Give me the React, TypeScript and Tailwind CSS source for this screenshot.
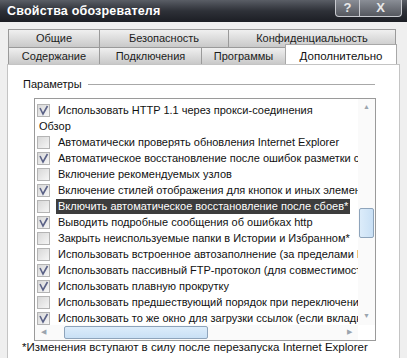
import React from 'react';

type Row = { text: string; checked?: boolean; header?: boolean; selected?: boolean };

const rows: Row[] = [
  { text: 'Использовать HTTP 1.1 через прокси-соединения', checked: true },
  { text: 'Обзор', header: true },
  { text: 'Автоматически проверять обновления Internet Explorer' },
  { text: 'Автоматическое восстановление после ошибок разметки страниц', checked: true },
  { text: 'Включение рекомендуемых узлов' },
  { text: 'Включение стилей отображения для кнопок и иных элементов', checked: true },
  { text: 'Включить автоматическое восстановление после сбоев*', selected: true },
  { text: 'Выводить подробные сообщения об ошибках http', checked: true },
  { text: 'Закрыть неиспользуемые папки в Истории и Избранном*' },
  { text: 'Использовать встроенное автозаполнение (за пределами Internet Explorer)' },
  { text: 'Использовать пассивный FTP-протокол (для совместимости с брандмауэрами)', checked: true },
  { text: 'Использовать плавную прокрутку', checked: true },
  { text: 'Использовать предшествующий порядок при переключении вкладок' },
  { text: 'Использовать то же окно для загрузки ссылок (если вкладки отключены)', checked: true },
];

const topTabs = [
  { label: 'Общие', w: 'w-[92px]' },
  { label: 'Безопасность', w: 'w-[130px]' },
  { label: 'Конфиденциальность', w: 'w-[168px]' },
];

const bottomTabs = [
  { label: 'Содержание', w: 'w-[92px]' },
  { label: 'Подключения', w: 'w-[103px]' },
  { label: 'Программы', w: 'w-[85px]' },
];

function CheckBox({ checked }: { checked?: boolean }) {
  return (
    <div className="w-[13px] h-[13px] shrink-0 border border-[#b4b4b4] bg-gradient-to-br from-[#d8d8d8] to-[#f6f6f6] flex items-center justify-center">
      {checked && (
        <svg width="11" height="11" viewBox="0 0 11 11">
          <path d="M2 3 L5 9 L9.5 1" fill="none" stroke="#5b6287" strokeWidth="1.6" />
        </svg>
      )}
    </div>
  );
}

function TabButton({ label, w }: { label: string; w: string }) {
  return (
    <div className={`${w} h-full flex items-center justify-center border border-[#9a9a9a] border-b-0 -ml-px first:ml-0 bg-gradient-to-b from-[#f0f0f0] to-[#c9c9c9] text-[#1c1c1c]`}>
      {label}
    </div>
  );
}

export default function App() {
  return (
    <div
      className="w-[407px] h-[358px] overflow-hidden bg-[#efefef] text-[11px] text-[#111] relative"
      style={{ fontFamily: '"Liberation Sans", Arial, sans-serif' }}
    >
      {/* Title bar */}
      <div className="h-[22px] flex items-center justify-between bg-gradient-to-b from-[#5a5e66] via-[#2e3138] to-[#1c1e24] pl-[7px] pr-[5px]">
        <span className="text-white font-bold text-[12.5px] tracking-[0.2px]">Свойства обозревателя</span>
        <div className="flex self-start h-[17px]">
          <div className="w-[25px] h-full flex items-center justify-center rounded-bl-[4px] border border-t-0 border-[#c8cacf] bg-gradient-to-b from-[#8a8e96] to-[#55585f] text-[#e8e8e8] font-bold text-[13px]">
            ?
          </div>
          <div className="w-[42px] h-full flex items-center justify-center rounded-br-[4px] border border-t-0 border-l-0 border-[#c8cacf] bg-gradient-to-b from-[#8a8e96] to-[#55585f] text-[#e8e8e8] font-bold text-[13px]">
            X
          </div>
        </div>
      </div>

      {/* Tabs */}
      <div className="pt-[7px] pl-[8px]">
        <div className="flex h-[18px]">
          {topTabs.map((t) => (
            <TabButton key={t.label} {...t} />
          ))}
        </div>
        <div className="flex h-[17px] items-end">
          {bottomTabs.map((t) => (
            <TabButton key={t.label} {...t} />
          ))}
          <div className="w-[112px] h-[20px] -mt-[3px] -ml-px flex items-start pt-[3px] justify-center bg-white border border-[#a8a8a8] border-b-0 relative z-10 text-[#111] text-[11.5px]">
            Дополнительно
          </div>
        </div>
      </div>

      {/* Panel */}
      <div className="ml-[7px] mr-[7px] h-[300px] bg-white border border-[#c4c4c4] pt-[12px] pl-[15px] pr-[24px]">
        <div className="flex items-center gap-[6px] h-[14px]">
          <span>Параметры</span>
          <div className="flex-1 h-px bg-[#a8a8a8]" />
        </div>

        {/* List box */}
        <div className="ml-[11px] mt-[7px] w-[342px] h-[243px] border border-[#9a9a9a] flex flex-col">
          <div className="flex flex-1 min-h-0">
            <div className="flex-1 min-w-0 overflow-hidden pt-[3px] pl-[2px]">
              {rows.map((r) => (
                <div key={r.text} className="h-[16px] flex items-center whitespace-nowrap">
                  {!r.header && <CheckBox checked={r.checked} />}
                  <span
                    className={`${r.header ? '' : 'ml-[6px]'} px-[2px] leading-[15px] ${
                      r.selected ? 'bg-[#3d3d3d] text-white' : ''
                    }`}
                  >
                    {r.text}
                  </span>
                </div>
              ))}
            </div>
            {/* Vertical scrollbar */}
            <div className="w-[17px] bg-[#fafafa] flex flex-col items-center">
              <div className="h-[17px] flex items-center justify-center text-[7px] text-[#9aa4ae]">▲</div>
              <div className="flex-1 w-full relative">
                <div className="absolute left-[1px] right-[1px] top-[92px] h-[30px] rounded-[2px] border border-[#8ea4bb] bg-gradient-to-r from-[#dcecfa] to-[#c9e0f5]" />
              </div>
              <div className="h-[17px] flex items-center justify-center text-[7px] text-[#9aa4ae]">▼</div>
            </div>
          </div>
          {/* Horizontal scrollbar */}
          <div className="h-[15px] flex bg-[#fafafa]">
            <div className="w-[17px] flex items-center justify-center text-[7px] text-[#9aa4ae]">◀</div>
            <div className="flex-1 relative">
              <div className="absolute top-[1px] bottom-[1px] left-[12px] w-[144px] rounded-[2px] border border-[#8ea4bb] bg-gradient-to-b from-[#dcecfa] to-[#c9e0f5]" />
            </div>
            <div className="w-[17px] flex items-center justify-center text-[7px] text-[#9aa4ae]">▶</div>
            <div className="w-[17px] bg-white" />
          </div>
        </div>

        <div className="ml-[-1px] -mt-[2px] text-[11.5px] whitespace-nowrap">*Изменения вступают в силу после перезапуска Internet Explorer</div>
      </div>
    </div>
  );
}
